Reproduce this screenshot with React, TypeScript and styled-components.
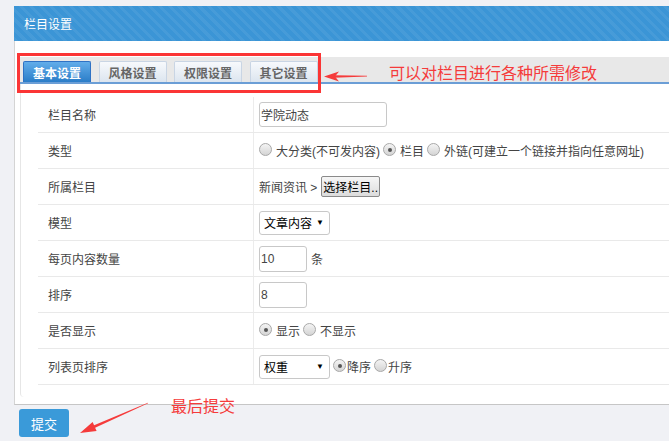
import styled, { createGlobalStyle } from 'styled-components';

const GlobalStyle = createGlobalStyle`
  body {
    margin: 0;
    background: #f0f1f5;
    font-family: "Liberation Sans", "Noto Sans CJK SC", sans-serif;
    font-size: 12px;
    color: #444;
  }
`;

const Page = styled.div`
  position: relative;
  height: 441px;
  box-sizing: border-box;
  padding: 6px 0 0 14px;
  overflow: hidden;
`;

const Panel = styled.div`
  background: #fff;
  border-left: 1px solid #d4d4d4;
  border-bottom: 1px solid #c6c6c6;
`;

const PanelHeader = styled.div`
  height: 35px;
  margin-left: -1px;
  padding-left: 10px;
  display: flex;
  align-items: center;
  color: #fff;
  font-size: 12px;
  background-color: #3b95d6;
  background-image: repeating-linear-gradient(
    45deg,
    rgba(255, 255, 255, 0.06) 0 3px,
    transparent 3px 7px
  );
`;

const PanelBody = styled.div`
  padding: 16px 0 7px 5px;
`;

const TabBar = styled.div`
  display: flex;
  gap: 7.5px;
  height: 27px;
  box-sizing: border-box;
  padding: 4px 0 0 3px;
  background: #e8e8e8;
  border-bottom: 2px solid #6b9ed6;
`;

const Tab = styled.div<{ $active?: boolean }>`
  width: 68px;
  height: 21px;
  box-sizing: border-box;
  display: flex;
  align-items: center;
  justify-content: center;
  font-weight: bold;
  font-size: 12px;
  border: 1px solid ${(p) => (p.$active ? '#2f72c4' : '#c9d5e4')};
  border-bottom: none;
  border-radius: 2px 2px 0 0;
  color: ${(p) => (p.$active ? '#fff' : '#666')};
  background: ${(p) =>
    p.$active
      ? 'linear-gradient(#62adea, #2b7dc8)'
      : 'linear-gradient(#f7f9fc, #dce5ef)'};
`;

const FormBox = styled.div`
  border-left: 1px solid #e6e6e6;
  border-bottom-left-radius: 4px;
  padding: 13px 0 12px 17px;
`;

const Row = styled.div`
  display: grid;
  grid-template-columns: 216px 1fr;
  height: 36px;
  box-sizing: border-box;
  border-bottom: 1px solid #e9e9e9;
`;

const Label = styled.div`
  display: flex;
  align-items: center;
  padding-left: 10px;
  border-right: 1px solid #ececec;
  color: #444;
`;

const Value = styled.div`
  display: flex;
  align-items: center;
  padding-left: 5px;
  color: #444;
  white-space: nowrap;
`;

const TextInput = styled.input<{ $w: number; $h: number }>`
  width: ${(p) => p.$w}px;
  height: ${(p) => p.$h}px;
  box-sizing: border-box;
  border: 1px solid #c8c8c8;
  border-radius: 3px;
  padding: 0 1px;
  font-family: inherit;
  font-size: 12px;
  color: #444;
  outline: none;
`;

const Unit = styled.span`
  margin-left: 4px;
`;

const Option = styled.label<{ $tight?: boolean }>`
  display: inline-flex;
  align-items: center;
  gap: ${(p) => (p.$tight ? 1 : 4)}px;
  margin-right: 3px;
`;

const Radio = styled.span<{ $checked?: boolean }>`
  position: relative;
  width: 13px;
  height: 13px;
  box-sizing: border-box;
  border-radius: 50%;
  border: 1px solid #a8a8a8;
  background: linear-gradient(#f4f4f4, #d4d4d4);
  margin-top: -2px;

  &::after {
    content: '';
    display: ${(p) => (p.$checked ? 'block' : 'none')};
    position: absolute;
    left: 3.5px;
    top: 3.5px;
    width: 4px;
    height: 4px;
    border-radius: 50%;
    background: #555;
  }
`;

const PickButton = styled.button`
  height: 21px;
  margin-left: 4px;
  padding: 0 1px;
  border: 1px solid #8a8a8a;
  border-radius: 2px;
  background: linear-gradient(#f6f6f6, #dcdcdc);
  font-family: inherit;
  font-size: 12px;
  color: #000;
`;

const SelectBox = styled.div`
  width: 71px;
  height: 24px;
  box-sizing: border-box;
  border: 1px solid #c8c8c8;
  border-radius: 3px;
  display: flex;
  align-items: center;
  justify-content: space-between;
  padding: 0 5px 0 4px;
  color: #000;
  font-size: 12px;
  margin-right: 3px;
`;

const Caret = styled.span`
  font-size: 8px;
  margin-left: 4px;
`;

const SubmitButton = styled.button`
  display: block;
  margin: 4px 0 0 5px;
  width: 50px;
  height: 28px;
  border: none;
  border-radius: 3px;
  background: #3a9ad9;
  color: #fff;
  font-family: inherit;
  font-size: 13px;
`;

const MarkBox = styled.div`
  position: absolute;
  left: 17px;
  top: 53px;
  width: 304px;
  height: 40px;
  box-sizing: border-box;
  border: 3px solid #fb3535;
  pointer-events: none;
`;

const Note = styled.div<{ $x: number; $y: number }>`
  position: absolute;
  left: ${(p) => p.$x}px;
  top: ${(p) => p.$y}px;
  color: #f53b3b;
  font-size: 16px;
  line-height: 20px;
  white-space: nowrap;
`;

const ArrowSvg = styled.svg<{ $x: number; $y: number }>`
  position: absolute;
  left: ${(p) => p.$x}px;
  top: ${(p) => p.$y}px;
`;

export default function App() {
  return (
    <>
      <GlobalStyle />
      <Page>
        <Panel>
          <PanelHeader>栏目设置</PanelHeader>
          <PanelBody>
            <TabBar>
              <Tab $active>基本设置</Tab>
              <Tab>风格设置</Tab>
              <Tab>权限设置</Tab>
              <Tab>其它设置</Tab>
            </TabBar>
            <FormBox>
              <Row>
                <Label>栏目名称</Label>
                <Value>
                  <TextInput $w={128} $h={25} value="学院动态" readOnly />
                </Value>
              </Row>
              <Row>
                <Label>类型</Label>
                <Value>
                  <Option>
                    <Radio />
                    大分类(不可发内容)
                  </Option>
                  <Option>
                    <Radio $checked />
                    栏目
                  </Option>
                  <Option>
                    <Radio />
                    外链(可建立一个链接并指向任意网址)
                  </Option>
                </Value>
              </Row>
              <Row>
                <Label>所属栏目</Label>
                <Value>
                  新闻资讯 &gt;
                  <PickButton>选择栏目..</PickButton>
                </Value>
              </Row>
              <Row>
                <Label>模型</Label>
                <Value>
                  <SelectBox>
                    文章内容<Caret>▼</Caret>
                  </SelectBox>
                </Value>
              </Row>
              <Row>
                <Label>每页内容数量</Label>
                <Value>
                  <TextInput $w={48} $h={26} value="10" readOnly />
                  <Unit>条</Unit>
                </Value>
              </Row>
              <Row>
                <Label>排序</Label>
                <Value>
                  <TextInput $w={48} $h={26} value="8" readOnly />
                </Value>
              </Row>
              <Row>
                <Label>是否显示</Label>
                <Value>
                  <Option>
                    <Radio $checked />
                    显示
                  </Option>
                  <Option>
                    <Radio />
                    不显示
                  </Option>
                </Value>
              </Row>
              <Row>
                <Label>列表页排序</Label>
                <Value>
                  <SelectBox>
                    权重<Caret>▼</Caret>
                  </SelectBox>
                  <Option $tight>
                    <Radio $checked />
                    降序
                  </Option>
                  <Option $tight>
                    <Radio />
                    升序
                  </Option>
                </Value>
              </Row>
            </FormBox>
          </PanelBody>
        </Panel>
        <SubmitButton>提交</SubmitButton>

        <MarkBox />
        <ArrowSvg $x={324} $y={70} width={44} height={13} viewBox="0 0 44 13">
          <polygon points="0,6.5 15,1.5 11,6.5 15,11.5" fill="#f53b3b" />
          <polygon points="10,5.2 43,5.8 43,6.6 10,7.8" fill="#f53b3b" />
        </ArrowSvg>
        <Note $x={389} $y={64}>可以对栏目进行各种所需修改</Note>

        <ArrowSvg $x={78} $y={400} width={74} height={36} viewBox="0 0 74 36">
          <polygon
            points="2,33 18.6,31.1 17.1,27.7 70.1,3.3 69.9,2.7 16.1,25.3 14.6,21.9"
            fill="#f53b3b"
          />
        </ArrowSvg>
        <Note $x={171} $y={397}>最后提交</Note>
      </Page>
    </>
  );
}
